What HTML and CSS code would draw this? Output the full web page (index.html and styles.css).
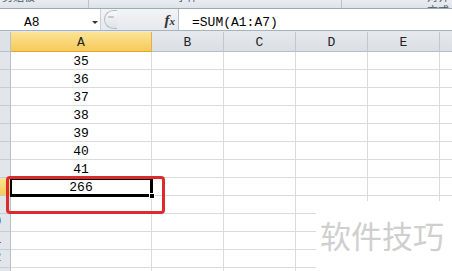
FILE: index.html
```html
<!DOCTYPE html>
<html>
<head>
<meta charset="utf-8">
<link rel="stylesheet" href="styles.css">
</head>
<body>
<div class="ribbon">
  <div class="grp g1"><span>剪贴板</span></div>
  <div class="grp g2"><span>字体</span></div>
  <div class="grp g3"><span>对齐方式</span></div>
</div>
<div class="fbar">
  <div class="namebox"><span class="ref">A8</span><span class="arrow"></span></div>
  <div class="ctrl"><span class="grip"><span class="dash"></span></span><span class="fx"><i>f</i><i class="x">x</i></span></div>
  <div class="input">=SUM(A1:A7)</div>
</div>
<div class="gap"></div>
<div class="sheet">
  <div class="corner"></div>
  <div class="ch sel">A</div><div class="ch">B</div><div class="ch">C</div><div class="ch">D</div><div class="ch">E</div><div class="ch last"></div>

  <div class="rh"><span>1</span></div><div class="c v">35</div><div class="c"></div><div class="c"></div><div class="c"></div><div class="c"></div><div class="c last"></div>
  <div class="rh"><span>2</span></div><div class="c v">36</div><div class="c"></div><div class="c"></div><div class="c"></div><div class="c"></div><div class="c last"></div>
  <div class="rh"><span>3</span></div><div class="c v">37</div><div class="c"></div><div class="c"></div><div class="c"></div><div class="c"></div><div class="c last"></div>
  <div class="rh"><span>4</span></div><div class="c v">38</div><div class="c"></div><div class="c"></div><div class="c"></div><div class="c"></div><div class="c last"></div>
  <div class="rh"><span>5</span></div><div class="c v">39</div><div class="c"></div><div class="c"></div><div class="c"></div><div class="c"></div><div class="c last"></div>
  <div class="rh"><span>6</span></div><div class="c v">40</div><div class="c"></div><div class="c"></div><div class="c"></div><div class="c"></div><div class="c last"></div>
  <div class="rh"><span>7</span></div><div class="c v">41</div><div class="c"></div><div class="c"></div><div class="c"></div><div class="c"></div><div class="c last"></div>
  <div class="rh sel"><span>8</span></div><div class="c v">266</div><div class="c"></div><div class="c"></div><div class="c"></div><div class="c"></div><div class="c last"></div>
  <div class="rh"><span>9</span></div><div class="c"></div><div class="c"></div><div class="c"></div><div class="c"></div><div class="c"></div><div class="c last"></div>
  <div class="rh"><span>10</span></div><div class="c"></div><div class="c"></div><div class="c"></div><div class="c"></div><div class="c"></div><div class="c last"></div>
  <div class="rh"><span>11</span></div><div class="c"></div><div class="c"></div><div class="c"></div><div class="c"></div><div class="c"></div><div class="c last"></div>
  <div class="rh"><span>12</span></div><div class="c"></div><div class="c"></div><div class="c"></div><div class="c"></div><div class="c"></div><div class="c last"></div>
  <div class="rh"><span>13</span></div><div class="c"></div><div class="c"></div><div class="c"></div><div class="c"></div><div class="c"></div><div class="c last"></div>

  <div class="selbox"><span class="handle"></span></div>
  <div class="redbox"></div>
</div>
<div class="watermark">软件技巧</div>
</body>
</html>
```
FILE: styles.css
```css
* { box-sizing: border-box; }
html, body { margin: 0; padding: 0; }
body {
  width: 452px;
  height: 271px;
  overflow: hidden;
  background: #ffffff;
  font-family: "Liberation Mono", "DejaVu Sans Mono", monospace;
  font-size: 13px;
  color: #000;
  position: relative;
}

/* ribbon remnant */
.ribbon {
  height: 9px;
  display: flex;
  background: linear-gradient(#e9edf2, #dde3ea);
  border-bottom: 1px solid #9ea9b6;
  overflow: hidden;
}
.grp {
  border-right: 1px solid #b9c3cf;
  overflow: hidden;
  font-family: "Noto Sans CJK SC", sans-serif;
  font-size: 11px;
  line-height: 14px;
  color: #4a5563;
}
.grp span { display: block; margin-top: -11px; }
.g1 { width: 89px; padding-left: 2px; }
.g2 { width: 253px; padding-left: 87px; }
.g3 { flex: 1; border-right: none; padding-left: 85px; }

/* formula bar */
.fbar {
  height: 22px;
  display: flex;
  border-bottom: 1px solid #a7b2bf;
  background: #fff;
}
.namebox {
  width: 101px;
  display: flex;
  align-items: flex-start;
  padding-top: 7px;
  padding-left: 24px;
  line-height: 14px;
  border-right: 1px solid #c9d0d8;
}
.ref { flex: 1; }
.arrow {
  width: 0; height: 0;
  border-left: 3px solid transparent;
  border-right: 3px solid transparent;
  border-top: 3px solid #333;
  margin-top: 5px;
  margin-right: 2px;
}
.ctrl {
  width: 78px;
  display: flex;
  align-items: center;
  background: linear-gradient(#f2f4f6, #e6e9ed);
  border-right: 1px solid #b5bec9;
  padding-left: 3px;
}
.grip {
  width: 13px;
  height: 19px;
  border: 1px solid #b4bcc6;
  border-right: none;
  border-radius: 10px 0 0 10px;
  background: linear-gradient(#f7f8fa, #dfe3e8);
  display: flex;
  justify-content: center;
  padding-top: 5px;
}
.dash { width: 6px; height: 2px; background: #c2c8d0; border-radius: 1px; }
.fx {
  margin-left: auto;
  margin-right: 3px;
  font-family: "Liberation Serif", serif;
  font-weight: bold;
  font-size: 15px;
  color: #333;
  line-height: 14px;
  padding-top: 1px;
}
.fx i { font-style: italic; }
.fx .x { font-size: 11px; }
.input {
  flex: 1;
  padding-left: 13px;
  padding-top: 7px;
  line-height: 14px;
  white-space: nowrap;
}
.gap { height: 1px; background: #e5e9ee; }

/* sheet */
.sheet {
  display: grid;
  grid-template-columns: 11px 141px 72px 72px 72px 72px 1fr;
  grid-template-rows: 20px;
  grid-auto-rows: 18px;
  height: 239px;
  overflow: hidden;
  position: relative;
}
.corner {
  background: #dde2e8;
  border-right: 1px solid #b7bfc9;
  border-bottom: 1px solid #b7bfc9;
}
.ch {
  background: linear-gradient(#e6e9ed, #dadfe5);
  border-right: 1px solid #c1c7cf;
  border-bottom: 1px solid #b7bfc9;
  text-align: center;
  line-height: 14px;
  padding-top: 4px;
  color: #222;
}
.ch.sel {
  background: linear-gradient(#fbe396, #f7ca5a);
  border-bottom: 1px solid #e2a534;
  border-right-color: #e0b04f;
}
.ch.last { border-right: none; }
.rh {
  background: #e2e6eb;
  border-right: 1px solid #b7bfc9;
  border-bottom: 1px solid #c5ccd4;
  overflow: hidden;
  font-size: 12px;
  line-height: 17px;
  color: #333;
}
.rh span { display: block; width: 26px; margin-left: -19px; text-align: center; }
.rh.sel { background: linear-gradient(#fbe396, #f7ca5a); }
.c {
  border-right: 1px solid #d9dbde;
  border-bottom: 1px solid #d9dbde;
}
.c.last { border-right: none; }
.v {
  text-align: center;
  line-height: 14px;
  padding-top: 3px;
}

/* overlays */
.selbox {
  position: absolute;
  left: 10px;
  top: 146px;
  width: 143px;
  height: 19px;
  border: 2px solid #000;
  border-right-width: 3px;
  border-bottom-width: 3px;
}
.handle {
  position: absolute;
  right: -5px;
  bottom: -5px;
  width: 6px;
  height: 6px;
  background: #000;
  border: 1px solid #fff;
}
.redbox {
  position: absolute;
  left: 6px;
  top: 144px;
  width: 159px;
  height: 38px;
  border: 3px solid #dc2b2b;
  border-radius: 4px;
}
.watermark {
  position: absolute;
  left: 316px;
  top: 201px;
  width: 136px;
  height: 70px;
  background: #fff;
  font-family: "Noto Sans CJK SC", sans-serif;
  font-size: 31px;
  line-height: 36px;
  padding-top: 16px;
  padding-left: 4px;
  color: #cfcfcf;
  white-space: nowrap;
  letter-spacing: 0;
}
```
